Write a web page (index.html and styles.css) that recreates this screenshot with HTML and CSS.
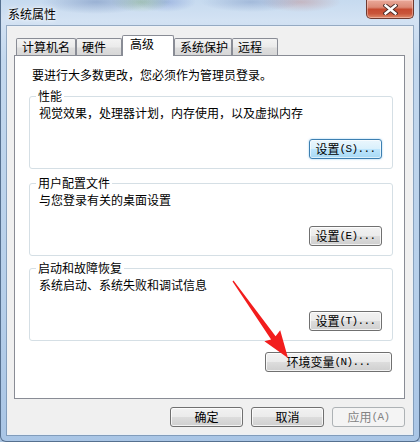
FILE: index.html
```html
<!DOCTYPE html>
<html lang="zh-CN">
<head>
<meta charset="utf-8">
<title>系统属性</title>
<link rel="stylesheet" href="styles.css">
</head>
<body>
<div class="window">
  <div class="titlebar">
    <span class="title">系统属性</span>
    <button class="close" aria-label="关闭">
      <svg width="15" height="11" viewBox="0 0 15 11">
        <path d="M2.5 1.5 L12.5 9.5 M12.5 1.5 L2.5 9.5" stroke="#4a2a26" stroke-width="4.2" stroke-linecap="square" fill="none"/>
        <path d="M2.5 1.5 L12.5 9.5 M12.5 1.5 L2.5 9.5" stroke="#ffffff" stroke-width="2.4" stroke-linecap="square" fill="none"/>
      </svg>
    </button>
  </div>
  <div class="client">
    <div class="tabs">
      <div class="tab w1">计算机名</div>
      <div class="tab w2">硬件</div>
      <div class="tab sel">高级</div>
      <div class="tab w4">系统保护</div>
      <div class="tab w5">远程</div>
    </div>
    <div class="pane">
      <p class="intro">要进行大多数更改，您必须作为管理员登录。</p>
      <section class="group">
        <h3 class="legend">性能</h3>
        <p class="desc">视觉效果，处理器计划，内存使用，以及虚拟内存</p>
        <button class="btn set hot">设置<span class="lat">(S)...</span></button>
      </section>
      <section class="group g2">
        <h3 class="legend">用户配置文件</h3>
        <p class="desc">与您登录有关的桌面设置</p>
        <button class="btn set">设置<span class="lat">(E)...</span></button>
      </section>
      <section class="group g3">
        <h3 class="legend">启动和故障恢复</h3>
        <p class="desc">系统启动、系统失败和调试信息</p>
        <button class="btn set">设置<span class="lat">(T)...</span></button>
      </section>
      <div class="envrow">
        <button class="btn env">环境变量<span class="lat">(N)...</span></button>
      </div>
    </div>
    <div class="footer">
      <button class="btn foot">确定</button>
      <button class="btn foot">取消</button>
      <button class="btn foot disabled" disabled>应用<span class="lat">(A)</span></button>
    </div>
  </div>
  <svg class="arrow" width="420" height="442" viewBox="0 0 420 442">
    <polygon fill="#f21d1d" points="233.5,280.6 275.6,336.2 280.2,330.2 288,358 264.4,341.2 271.1,339.5 232.5,281.4"/>
  </svg>
</div>
</body>
</html>
```

FILE: styles.css
```css
* { box-sizing: border-box; }

html, body {
  margin: 0;
  padding: 0;
  width: 420px;
  height: 442px;
  overflow: hidden;
  background: #aac3e0;
}

body {
  font-family: "Noto Sans CJK SC", "Noto Sans", sans-serif;
  font-size: 12px;
  color: #000;
}

.window {
  position: relative;
  width: 420px;
  height: 442px;
  display: flex;
  flex-direction: column;
  border: 1px solid #56708f;
  border-top: none;
  border-radius: 0 0 6px 6px;
  background:
    radial-gradient(ellipse 55px 12px at 95px 2px, rgba(70, 100, 160, 0.35), transparent),
    radial-gradient(ellipse 30px 10px at 140px 2px, rgba(120, 170, 90, 0.35), transparent),
    radial-gradient(ellipse 30px 10px at 165px 2px, rgba(90, 120, 200, 0.35), transparent),
    radial-gradient(ellipse 50px 10px at 250px 2px, rgba(80, 110, 170, 0.3), transparent),
    radial-gradient(ellipse 40px 10px at 300px 2px, rgba(190, 100, 90, 0.3), transparent),
    linear-gradient(180deg, #c6daef 0px, #d3e2f3 20px, #c3d8ee 60px, #b6cfea 300px, #a9c5e5 442px);
}

.titlebar {
  height: 27px;
  display: flex;
  align-items: center;
  padding-left: 7px;
  flex: none;
}

.title {
  line-height: 14px;
  text-shadow: 0 0 6px rgba(255, 255, 255, 0.95), 0 0 3px rgba(255, 255, 255, 0.9);
}

.close {
  align-self: flex-start;
  margin: 0 5px 0 auto;
  width: 48px;
  height: 19px;
  padding: 0;
  border: 1px solid #6e3a30;
  border-top: none;
  border-radius: 0 0 5px 5px;
  background: linear-gradient(180deg, #eaa99a 0%, #dc8a76 40%, #c64b31 52%, #c9553a 75%, #de8a6a 100%);
  box-shadow: inset 0 0 0 1px rgba(255, 220, 210, 0.45);
  display: flex;
  align-items: center;
  justify-content: center;
}

.client {
  flex: 1;
  margin: 0 7px 7px;
  padding: 8px 7px 0 6px;
  background: #f0f0f0;
  box-shadow: 0 0 0 1px rgba(255, 255, 255, 0.85), 0 0 0 2px rgba(90, 115, 145, 0.5);
  display: flex;
  flex-direction: column;
}

.tabs {
  display: flex;
  align-items: flex-start;
  height: 21px;
  padding-left: 2px;
  flex: none;
}

.tab {
  height: 18px;
  margin-top: 3px;
  padding-left: 5px;
  border: 1px solid #898c95;
  border-bottom: none;
  border-radius: 2px 2px 0 0;
  background: linear-gradient(180deg, #f3f3f3 0%, #ebebeb 45%, #dedede 55%, #d6d6d6 100%);
  line-height: 16px;
  white-space: nowrap;
}

.w1 { width: 60px; }
.w2 { width: 46px; }
.w4 { width: 58px; }
.w5 { width: 46px; }

.tab.sel {
  position: relative;
  z-index: 1;
  width: 52px;
  height: 21px;
  margin-top: 0;
  padding-left: 7px;
  background: #fff;
}

.pane {
  margin-top: -1px;
  height: 344px;
  flex: none;
  border: 1px solid #898c95;
  background: #fff;
  padding: 0 11px 0 14px;
  display: flex;
  flex-direction: column;
  align-items: flex-start;
}

p, h3 { margin: 0; font-weight: normal; font-size: 12px; line-height: 14px; }

.intro {
  margin: 12px 0 0 3px;
}

.group {
  margin-top: 14px;
  width: 364px;
  height: 73px;
  flex: none;
  border: 1px solid #d5dfe5;
  border-radius: 3px;
  box-shadow: inset 0 0 0 1px #ffffff;
  display: flex;
  flex-direction: column;
  align-items: flex-start;
}

.g2 { margin-top: 14px; }
.g3 { margin-top: 12px; }

.legend {
  margin: -8px 0 0 6px;
  padding: 0 2px;
  background: #fff;
}

.desc {
  margin: 3px 0 0 9px;
}

.btn {
  font-family: "Noto Sans CJK SC", "Noto Sans", sans-serif;
  font-size: 12px;
  line-height: 14px;
  color: #000;
  height: 20px;
  padding: 0;
  border: 1px solid #707070;
  border-radius: 3px;
  background: linear-gradient(180deg, #f2f2f2 0%, #ebebeb 50%, #dddddd 50%, #cfcfcf 100%);
  box-shadow: inset 0 0 0 1px rgba(255, 255, 255, 0.75);
  display: flex;
  align-items: center;
  justify-content: center;
  white-space: nowrap;
}

.lat {
  font-family: "Liberation Mono", monospace;
  font-size: 11px;
  letter-spacing: -0.6px;
}

.set {
  width: 73px;
  align-self: flex-end;
  margin: auto 10px 9px 0;
}

.hot {
  border-color: #3c7fb1;
  background: linear-gradient(180deg, #eaf6fd 0%, #d9f0fc 50%, #bee6fd 50%, #a7d9f5 100%);
  box-shadow: inset 0 0 0 1px rgba(255, 255, 255, 0.6), 0 0 2px rgba(60, 160, 230, 0.6);
}

.envrow {
  width: 364px;
  display: flex;
  justify-content: flex-end;
  margin-top: 11px;
}

.env {
  width: 127px;
  margin-right: 1px;
}

.footer {
  display: flex;
  justify-content: flex-end;
  gap: 8px;
  margin-top: 8px;
  flex: none;
}

.foot {
  width: 73px;
}

.disabled {
  color: #838383;
  border-color: #adb2b5;
  background: #f4f4f4;
  box-shadow: none;
}

.arrow {
  position: absolute;
  left: -1px;
  top: 0;
  pointer-events: none;
}
```
